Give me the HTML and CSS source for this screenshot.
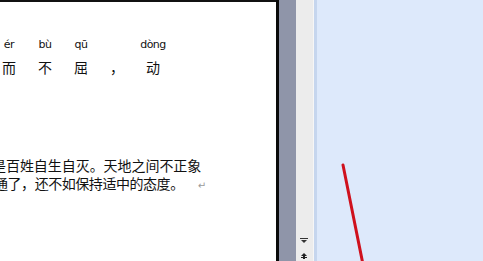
FILE: index.html
```html
<!DOCTYPE html>
<html lang="zh">
<head>
<meta charset="utf-8">
<link rel="stylesheet" href="styles.css">
</head>
<body>
<div class="app">
  <div class="doc">
    <div class="ruby-row pinyin">
      <span class="col">ér</span><span class="col">bù</span><span class="col">qū</span><span class="col"></span><span class="col">dòng</span>
    </div>
    <div class="ruby-row hanzi">
      <span class="col">而</span><span class="col">不</span><span class="col">屈</span><span class="col">，</span><span class="col">动</span>
    </div>
    <div class="para">
      <div class="line l1">是百姓自生自灭。天地之间不正象</div>
      <div class="line l2">通了，还不如保持适中的态度。<span class="ret">↵</span></div>
    </div>
  </div>
  <div class="edge"></div>
  <div class="gutter"></div>
  <div class="scroll">
    <div class="arrows">
      <svg class="arr" width="10" height="6" viewBox="0 0 10 6"><rect x="1" y="0" width="8" height="1" fill="#333"/><polygon points="2,2 8,2 5,5" fill="#333"/></svg>
      <svg class="arr2" width="10" height="6" viewBox="0 0 10 6"><polygon points="5,0 8,3 2,3" fill="#222"/><rect x="4" y="2" width="2" height="4" fill="#222"/><rect x="2" y="4" width="6" height="1" fill="#222"/></svg>
    </div>
  </div>
  <div class="seam"></div>
  <div class="pane">
    <svg class="stroke" width="166" height="261" viewBox="0 0 166 261">
      <line x1="26" y1="165" x2="45.5" y2="262" stroke="#cf111d" stroke-width="3" stroke-linecap="round"/>
    </svg>
  </div>
</div>
</body>
</html>
```
FILE: styles.css
```css
html, body {
  margin: 0;
  padding: 0;
  width: 483px;
  height: 261px;
  overflow: hidden;
}
.app {
  display: flex;
  width: 483px;
  height: 261px;
}
.doc {
  width: 276px;
  flex: none;
  background: #ffffff;
  border-top: 2px solid #111;
  box-sizing: border-box;
  overflow: hidden;
  font-family: "Noto Sans CJK SC", "Noto Sans", sans-serif;
  color: #111;
}
.ruby-row {
  display: flex;
  margin-left: -9px;
}
.col {
  width: 36px;
  flex: none;
  text-align: center;
}
.pinyin {
  margin-top: 36px;
  font-family: "DejaVu Sans", sans-serif;
  font-size: 11px;
  line-height: 13px;
  height: 13px;
  letter-spacing: -0.5px;
}
.hanzi {
  margin-top: 7px;
  font-size: 14px;
  line-height: 18px;
}
.para {
  margin-top: 80px;
  font-size: 14px;
  line-height: 18px;
  white-space: nowrap;
}
.line.l1 {
  margin-left: -8px;
  letter-spacing: -0.05px;
}
.line.l2 {
  margin-left: -6px;
  letter-spacing: -0.45px;
}
.ret {
  color: #9a9a9a;
  font-family: "DejaVu Sans", sans-serif;
  font-size: 10px;
  margin-left: 14px;
}
.edge {
  width: 3px;
  flex: none;
  background: #0a0a0a;
}
.gutter {
  width: 17px;
  flex: none;
  background: #8f95a9;
}
.scroll {
  width: 18px;
  flex: none;
  background: #ececec;
  border-right: 1px solid #f6f6f6;
  box-sizing: border-box;
  display: flex;
  flex-direction: column;
  justify-content: flex-end;
}
.arrows {
  display: flex;
  flex-direction: column;
  align-items: flex-start;
  padding-left: 3px;
  padding-bottom: 2px;
  gap: 9px;
}
.seam {
  width: 3px;
  flex: none;
  background: #c6d6ee;
}
.pane {
  flex: 1;
  background: #dde9fb;
  position: relative;
}
.stroke {
  position: absolute;
  left: 0;
  top: 0;
}
```
